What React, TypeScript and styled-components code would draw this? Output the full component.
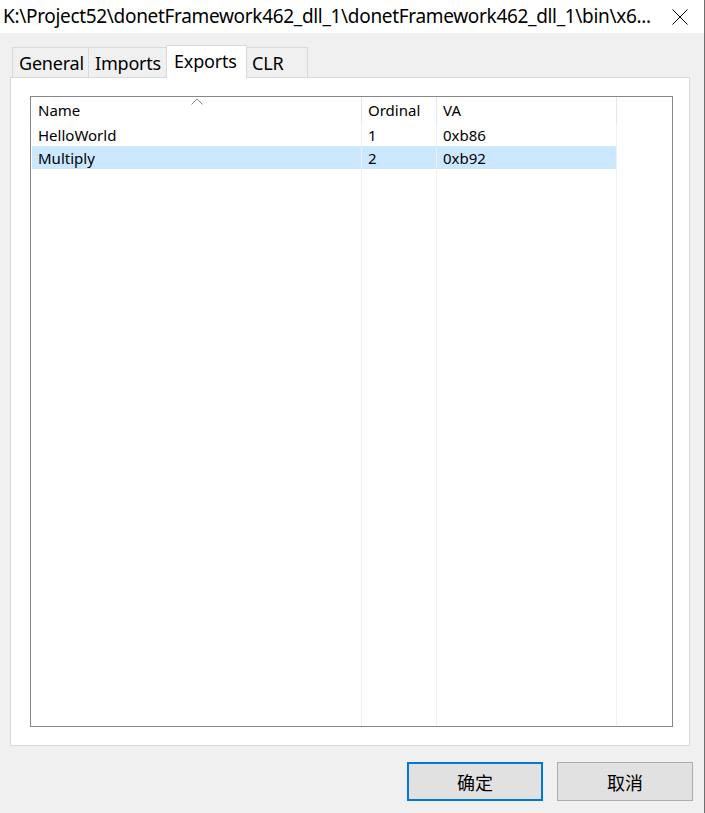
import React from "react";
import styled, { createGlobalStyle } from "styled-components";

const GlobalStyle = createGlobalStyle`
  html, body {
    margin: 0;
    padding: 0;
    background: #f0f0f0;
  }
  * {
    box-sizing: border-box;
  }
`;

const UI_FONT = `"Noto Sans", "Noto Sans CJK SC", sans-serif`;

const Window = styled.div`
  width: 705px;
  height: 813px;
  display: flex;
  flex-direction: column;
  background: #f0f0f0;
  border-right: 1px solid #6f6f6f;
  font-family: ${UI_FONT};
  color: #000;
`;

const TitleBar = styled.div`
  height: 33px;
  flex: none;
  display: flex;
  align-items: center;
  justify-content: space-between;
  background: #fff;
  padding-left: 3px;
`;

const Title = styled.div`
  font-size: 19px;
  white-space: nowrap;
  line-height: 33px;
  letter-spacing: -0.32px;
`;

const CloseButton = styled.div`
  width: 46px;
  height: 33px;
  flex: none;
  display: flex;
  align-items: center;
  justify-content: center;
  margin-right: 1px;
`;

const Body = styled.div`
  flex: 1;
  display: flex;
  flex-direction: column;
  padding: 12px 11px 0 10px;
`;

const TabStrip = styled.div`
  height: 32px;
  display: flex;
  align-items: flex-end;
  padding-left: 2px;
  position: relative;
  z-index: 1;
`;

const Tab = styled.div<{ $active?: boolean; $first?: boolean; $width: number }>`
  width: ${(p) => p.$width}px;
  height: ${(p) => (p.$active ? 33 : 30)}px;
  margin-bottom: ${(p) => (p.$active ? -1 : 0)}px;
  margin-left: ${(p) => (p.$active ? -1 : 0)}px;
  margin-right: ${(p) => (p.$active ? -1 : 0)}px;
  display: flex;
  align-items: center;
  padding: 0 0 ${(p) => (p.$active ? 3 : 0)}px ${(p) => (p.$active ? 7 : 6)}px;
  background: ${(p) => (p.$active ? "#fff" : "#f0f0f0")};
  border: 1px solid #d9d9d9;
  border-bottom: none;
  border-left-width: ${(p) => (p.$first || p.$active ? 1 : 0)}px;
  font-size: 18px;
  letter-spacing: -0.2px;
  position: relative;
  z-index: ${(p) => (p.$active ? 2 : 1)};
`;

const Panel = styled.div`
  flex: 1;
  display: flex;
  background: #fff;
  border: 1px solid #d9d9d9;
  margin-right: 3px;
  padding: 18px 16px 18px 19px;
`;

const ListView = styled.div`
  flex: 1;
  display: grid;
  grid-template-columns: 330px 75px 180px 1fr;
  grid-template-rows: 26px 23px 23px 1fr;
  border: 1px solid #828790;
  padding-left: 1px;
  background: #fff;
  font-size: 15px;
`;

const HeaderCell = styled.div<{ $last?: boolean }>`
  position: relative;
  display: flex;
  align-items: center;
  padding-left: 6px;
  border-right: ${(p) => (p.$last ? "none" : "1px solid #e5e5e5")};
`;

const SortArrow = styled.svg`
  position: absolute;
  left: 159px;
  top: 1px;
`;

const Cell = styled.div<{ $selected?: boolean; $last?: boolean }>`
  display: flex;
  align-items: center;
  padding-left: 6px;
  white-space: nowrap;
  background: ${(p) => (p.$selected && !p.$last ? "#cce8ff" : "transparent")};
  border-right: ${(p) => (p.$last ? "none" : "1px solid #eaf1fa")};
`;

const ButtonRow = styled.div`
  flex: none;
  display: flex;
  justify-content: flex-end;
  gap: 14px;
  padding: 16px 0 12px;
`;

const Button = styled.button<{ $primary?: boolean }>`
  width: 136px;
  height: 39px;
  background: #e1e1e1;
  border: ${(p) => (p.$primary ? "2px solid #0078d7" : "1px solid #adadad")};
  font-family: ${UI_FONT};
  font-size: 18px;
  color: #000;
  padding: 0;
  cursor: default;
`;

const columns = ["Name", "Ordinal", "VA"];

const exportsData = [
  { name: "HelloWorld", ordinal: "1", va: "0xb86" },
  { name: "Multiply", ordinal: "2", va: "0xb92" },
];

const tabs = [
  { label: "General", width: 77 },
  { label: "Imports", width: 78 },
  { label: "Exports", width: 81 },
  { label: "CLR", width: 62 },
];

export default function App() {
  const selected = 1;
  return (
    <>
      <GlobalStyle />
      <Window>
        <TitleBar>
          <Title>K:\Project52\donetFramework462_dll_1\donetFramework462_dll_1\bin\x6...</Title>
          <CloseButton>
            <svg width="16" height="16" viewBox="0 0 16 16">
              <path d="M0.5 0.5 L15.5 15.5 M15.5 0.5 L0.5 15.5" stroke="#000" strokeWidth="1" fill="none" />
            </svg>
          </CloseButton>
        </TitleBar>
        <Body>
          <TabStrip>
            {tabs.map((t, i) => (
              <Tab key={t.label} $active={t.label === "Exports"} $first={i === 0} $width={t.width}>
                {t.label}
              </Tab>
            ))}
          </TabStrip>
          <Panel>
            <ListView>
              {columns.map((c, i) => (
                <HeaderCell key={c}>
                  {c}
                  {i === 0 && (
                    <SortArrow width="12" height="7" viewBox="0 0 12 7">
                      <path d="M0.5 6.5 L6 1 L11.5 6.5" stroke="#8a8a8a" strokeWidth="1" fill="none" />
                    </SortArrow>
                  )}
                </HeaderCell>
              ))}
              <HeaderCell $last />
              {exportsData.map((row, i) => (
                <React.Fragment key={row.name}>
                  <Cell $selected={i === selected}>{row.name}</Cell>
                  <Cell $selected={i === selected}>{row.ordinal}</Cell>
                  <Cell $selected={i === selected}>{row.va}</Cell>
                  <Cell $last />
                </React.Fragment>
              ))}
              <Cell />
              <Cell />
              <Cell />
              <Cell $last />
            </ListView>
          </Panel>
          <ButtonRow>
            <Button $primary>确定</Button>
            <Button>取消</Button>
          </ButtonRow>
        </Body>
      </Window>
    </>
  );
}
